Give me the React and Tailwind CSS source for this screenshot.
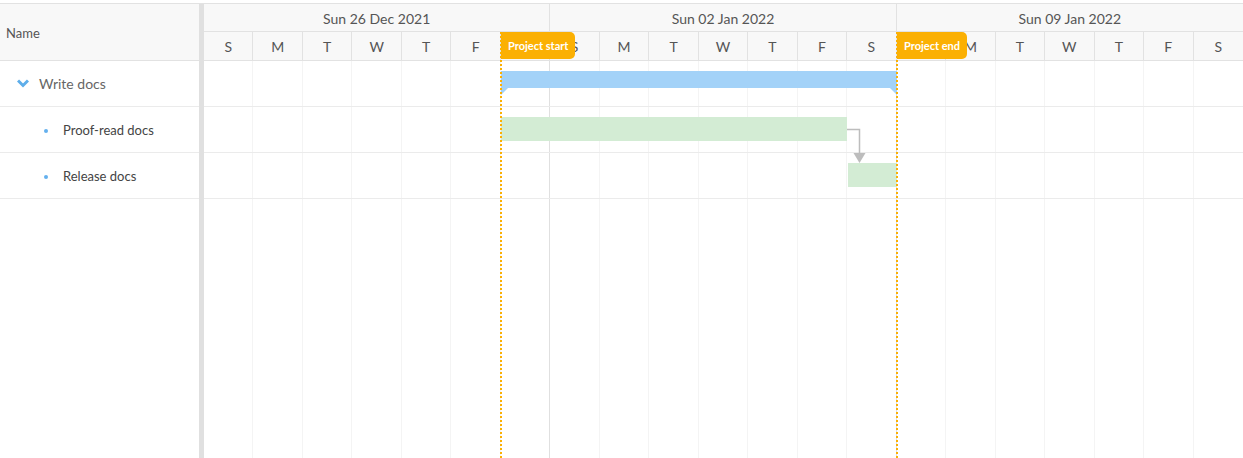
import React from "react";

const DAYS = ["S", "M", "T", "W", "T", "F", "S"];
const WEEKS = ["Sun 26 Dec 2021", "Sun 02 Jan 2022", "Sun 09 Jan 2022"];
const TL_WIDTH = 1039;
const DAY = TL_WIDTH / 21;

const rows = [
  { name: "Write docs", parent: true },
  { name: "Proof-read docs" },
  { name: "Release docs" },
];

const bars = [
  { row: 1, start: 6, days: 7, kind: "task" },
  { row: 2, start: 13, days: 1, kind: "task" },
];

function Chevron() {
  return (
    <svg width="12" height="9" viewBox="0 0 12 9" className="shrink-0">
      <path d="M1 1.5 L6 6.5 L11 1.5" fill="none" stroke="#5eaeea" strokeWidth="3" strokeLinejoin="miter" />
    </svg>
  );
}

function Marker({ day, label }) {
  return (
    <div className="absolute top-[28px] bottom-0 pointer-events-none" style={{ left: Math.round(day * DAY) }}>
      <div className="absolute left-0 top-0 bottom-0 w-[2px] -ml-px bg-[repeating-linear-gradient(to_bottom,#fbb003_0_2px,transparent_2px_4px)]" />
      <div className="relative h-[27px] px-[7px] pt-[1px] flex items-center bg-[#fbb003] text-white text-[11px] font-bold rounded-r-[5px] whitespace-nowrap">
        {label}
      </div>
    </div>
  );
}

export default function App() {
  return (
    <div className="w-[1243px] h-[458px] overflow-hidden bg-white pt-[3px] font-['Lato','Open_Sans',sans-serif]">
      <div className="flex h-full border-t border-[#e2e2e2]">
        {/* Left pane */}
        <div className="w-[199px] shrink-0 flex flex-col">
          <div className="h-[57px] bg-[#f8f8f8] border-b border-[#e2e2e2] flex items-center pl-[6px] pt-[3px] text-[13px] text-[#555]">
            Name
          </div>
          {rows.map((r) =>
            r.parent ? (
              <div key={r.name} className="h-[46px] border-b border-[#ebebeb] flex items-center pl-[17px] gap-[10px] text-[14px] text-[#666]">
                <Chevron />
                <span>{r.name}</span>
              </div>
            ) : (
              <div key={r.name} className="h-[46px] border-b border-[#ebebeb] flex items-center pl-[44px] gap-[15px] pt-[2px] text-[13px] text-[#444]">
                <span className="w-[4px] h-[4px] rounded-full bg-[#64b0ee]" />
                <span>{r.name}</span>
              </div>
            )
          )}
        </div>
        {/* Splitter */}
        <div className="w-[5px] shrink-0 bg-[#e0e0e0]" />
        {/* Timeline */}
        <div className="relative w-[1039px] shrink-0 flex flex-col">
          <div className="bg-[#f8f8f8] border-b border-[#e2e2e2]">
            <div className="grid grid-cols-3 h-[28px] border-b border-[#e2e2e2]">
              {WEEKS.map((w, i) => (
                <div key={w} className={`flex items-center justify-center pt-[1px] text-[14px] text-[#555] ${i < 2 ? "border-r border-[#e2e2e2]" : ""}`}>
                  {w}
                </div>
              ))}
            </div>
            <div className="grid grid-cols-[repeat(21,minmax(0,1fr))] h-[28px]">
              {Array.from({ length: 21 }).map((_, i) => (
                <div key={i} className={`flex items-center justify-center pt-[1px] text-[14px] text-[#555] ${i < 20 ? "border-r border-[#e2e2e2]" : ""}`}>
                  {DAYS[i % 7]}
                </div>
              ))}
            </div>
          </div>
          {/* Body */}
          <div className="relative flex-1">
            <div className="grid grid-cols-[repeat(21,minmax(0,1fr))] h-full">
              {Array.from({ length: 21 }).map((_, i) => (
                <div key={i} className={i === 20 ? "" : i % 7 === 6 ? "border-r border-[#e0e0e0]" : "border-r border-[#f4f4f4]"} />
              ))}
            </div>
            <div className="absolute inset-0">
              {rows.map((r) => (
                <div key={r.name} className="h-[46px] border-b border-[#ebebeb]" />
              ))}
              {/* Summary bar */}
              <div className="absolute top-[10px] h-[17px] bg-[#a3d2f8]" style={{ left: Math.round(6 * DAY), width: Math.round(8 * DAY) }}>
                <div className="absolute left-0 top-full w-0 h-0 border-t-[7px] border-t-[#a3d2f8] border-r-[7px] border-r-transparent" />
                <div className="absolute right-0 top-full w-0 h-0 border-t-[7px] border-t-[#a3d2f8] border-l-[7px] border-l-transparent" />
              </div>
              {bars.map((b, i) => (
                <div
                  key={i}
                  className="absolute h-[24px] bg-[#d3ecd4]"
                  style={{ top: b.row * 46 + 10, left: Math.round(b.start * DAY) + (b.row === 2 ? 1 : 0), width: Math.round((b.start + b.days) * DAY) - Math.round(b.start * DAY) - (b.row === 2 ? 1 : 0) }}
                />
              ))}
              {/* Dependency arrow */}
              <svg className="absolute left-0 top-0 pointer-events-none" width="1039" height="150">
                <path d="M643 68.5 H655.5 V93" fill="none" stroke="#bdbdbd" strokeWidth="1.5" />
                <path d="M649.5 92 L661.5 92 L655.5 102 Z" fill="#bdbdbd" />
              </svg>
            </div>
          </div>
          <Marker day={6} label="Project start" />
          <Marker day={14} label="Project end" />
        </div>
      </div>
    </div>
  );
}
